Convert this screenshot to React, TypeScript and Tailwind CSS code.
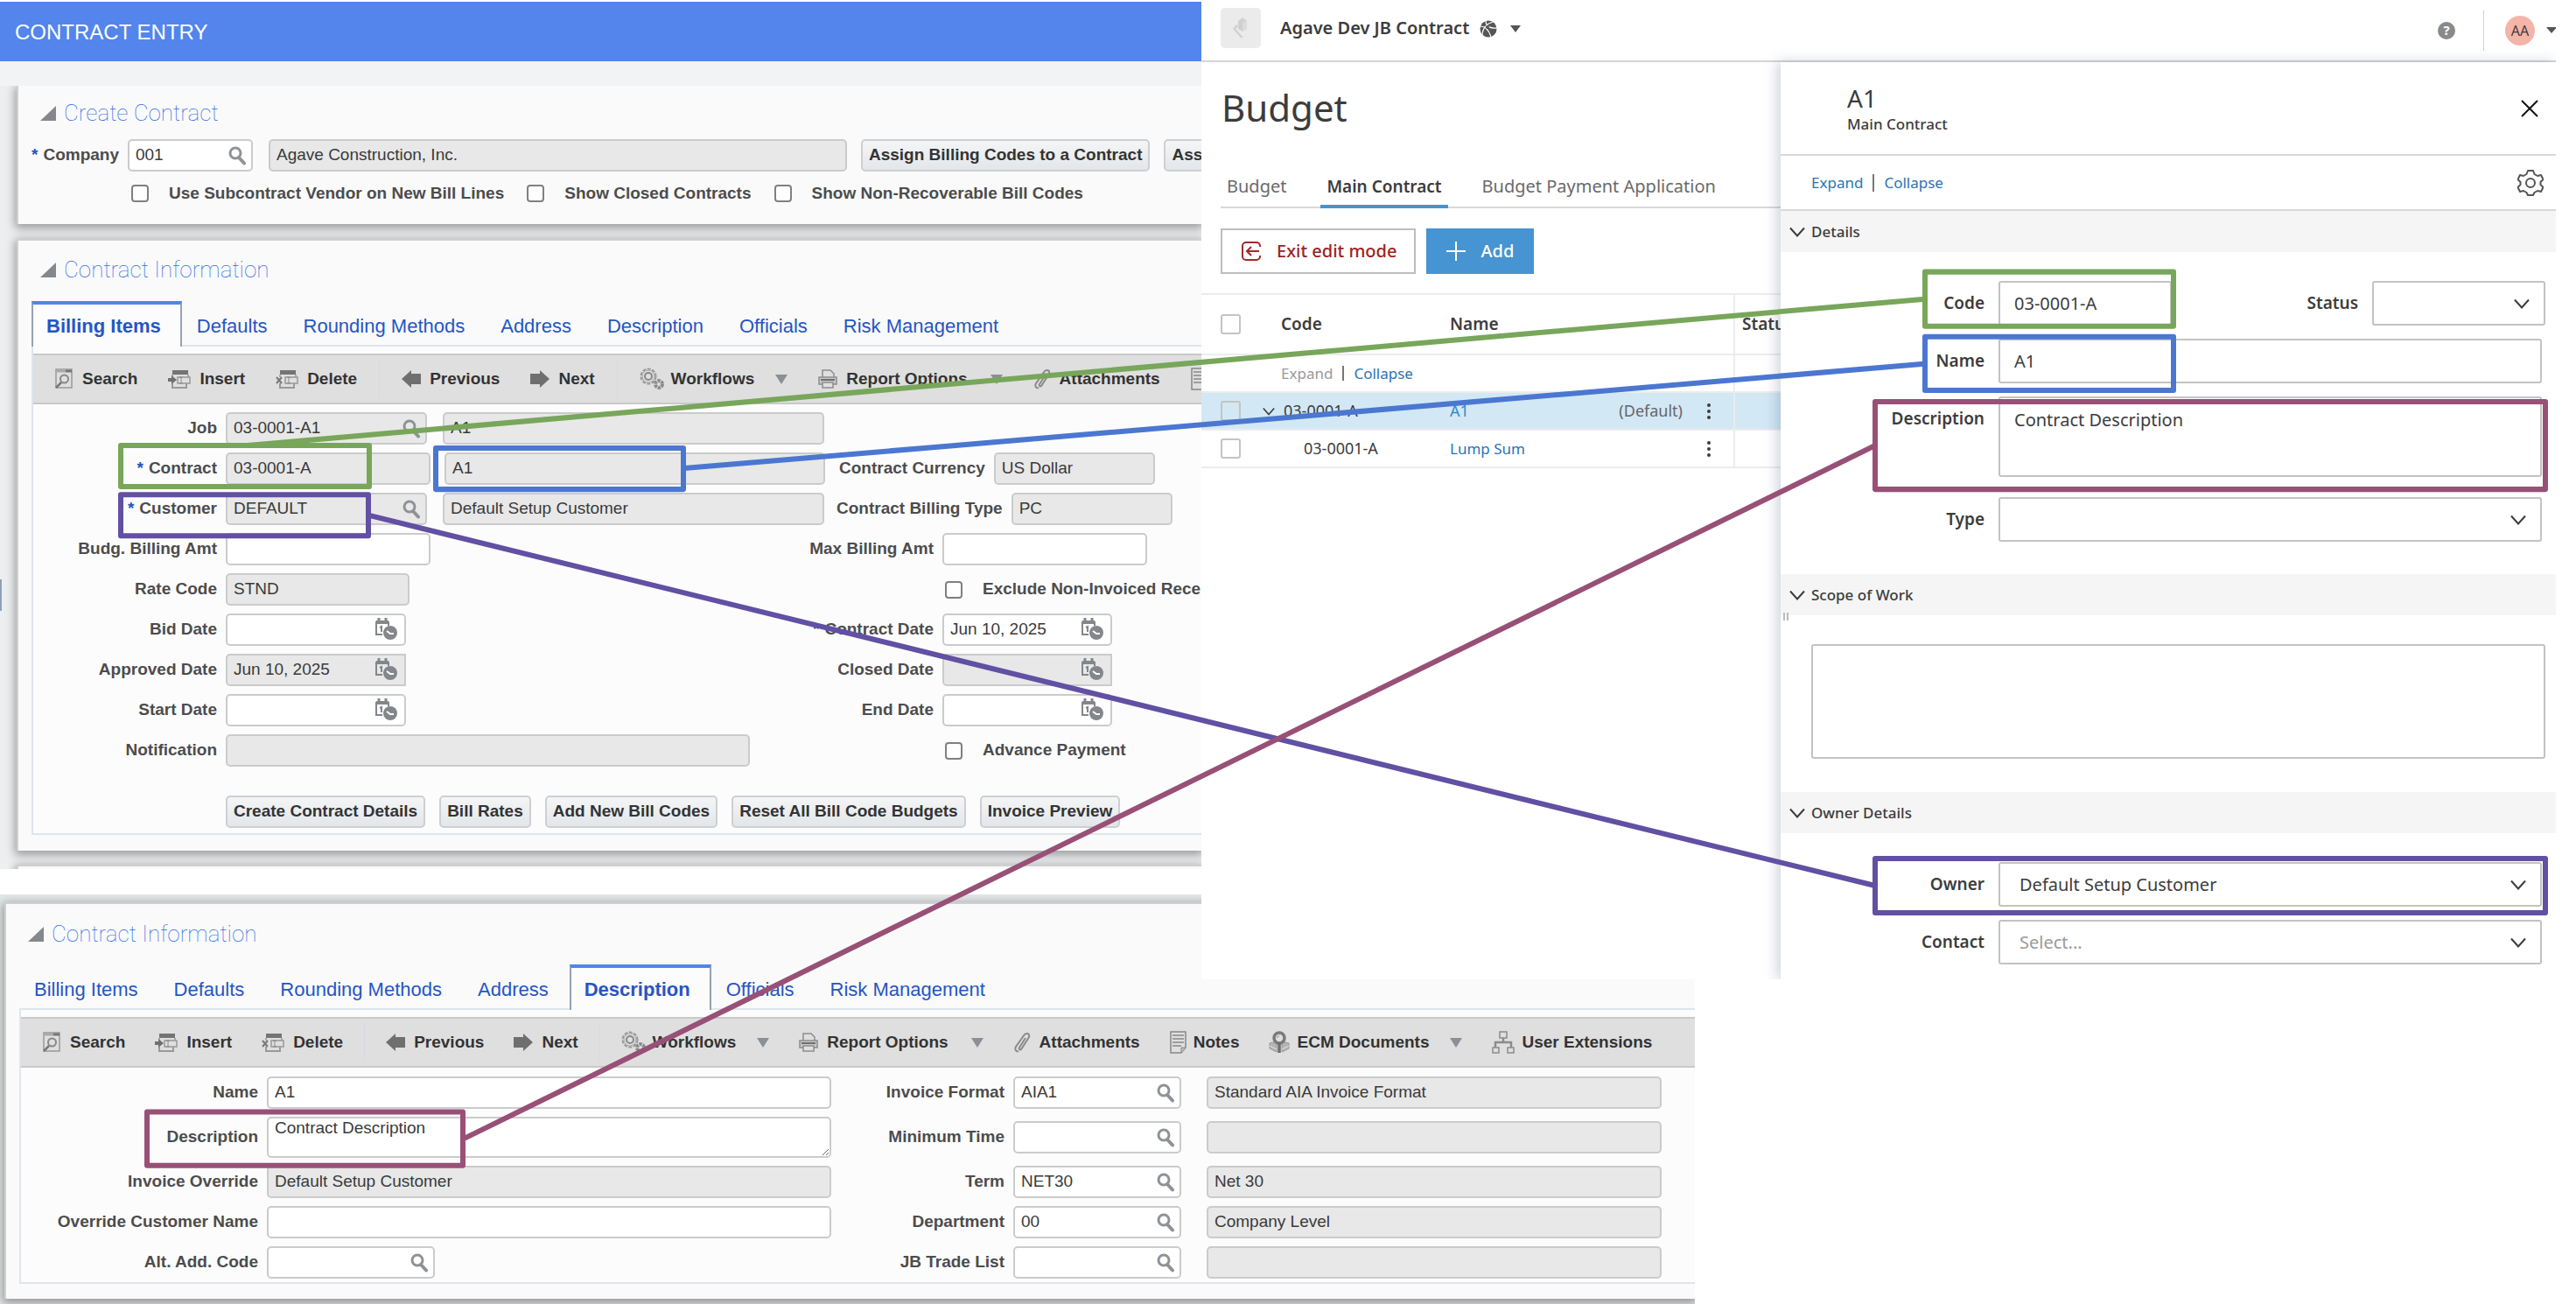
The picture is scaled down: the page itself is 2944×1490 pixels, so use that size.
import type { ReactNode } from 'react';
import { clsx } from 'clsx';

/* ---------- icons ---------- */

function SearchIcon() {
  return (
    <svg viewBox="0 0 22 22" className="h-[22px] w-[22px]" fill="none" stroke="#8e9297">
      <circle cx="9" cy="8" r="6" strokeWidth="3" />
      <path d="M13 13l6 6.5" strokeWidth="4" strokeLinecap="round" />
    </svg>
  );
}

function CalendarIcon() {
  return (
    <svg viewBox="0 0 26 26" className="h-[26px] w-[26px]" fill="none" stroke="#83878c">
      <path d="M9 20H2V6h14v4" strokeWidth="2" />
      <path d="M2 6h14" strokeWidth="4" />
      <path d="M5 1v5M13 1v5" strokeWidth="3" />
      <path d="M6 12l2-1v6" strokeWidth="2" />
      <circle cx="18" cy="18" r="8" fill="#83878c" stroke="none" />
      <path d="M14 16l4 3h4" stroke="#fff" strokeWidth="2" />
    </svg>
  );
}

function CollapseTriangle() {
  return (
    <svg viewBox="0 0 18 17" className="h-[17px] w-[18px]">
      <path d="M18 0v17H0z" fill="#84888c" />
    </svg>
  );
}

function DropTriangle() {
  return (
    <svg viewBox="0 0 14 11" className="h-[11px] w-[14px]">
      <path d="M0 0h14L7 11z" fill="#8b8f96" />
    </svg>
  );
}

function FindPageIcon() {
  return (
    <svg viewBox="0 0 22 24" className="h-6 w-[22px]" fill="none" stroke="#777">
      <path d="M2 1h18v21H2z" stroke="#999" strokeWidth="1.500" />
      <path d="M3 3h10" stroke="#aaa" strokeWidth="3" />
      <path d="M13 3h7" strokeWidth="3" />
      <circle cx="11.500" cy="12" r="4.500" strokeWidth="2" stroke="#888" />
      <path d="M8 16l-6 6" strokeWidth="2.500" />
    </svg>
  );
}

function InsertIcon() {
  return (
    <svg viewBox="0 0 26 22" className="h-[22px] w-[26px]" fill="none" stroke="#999">
      <path d="M5 1h18v5H5z" fill="#747474" stroke="none" />
      <path d="M5 6v3M23 6v3M11 9h14v7H11z" strokeWidth="1.500" />
      <path d="M5 16v5h16v-5" strokeWidth="2" />
      <path d="M0 10h4V7l6 5-6 5v-3H0z" fill="#707070" stroke="none" />
      <path d="M15 9v7M13 9h4M13 16h4" stroke="#8a8a8a" />
    </svg>
  );
}

function DeleteIcon() {
  return (
    <svg viewBox="0 0 26 22" className="h-[22px] w-[26px]" fill="none" stroke="#999">
      <path d="M5 1h18v5H5z" fill="#747474" stroke="none" />
      <path d="M5 6v3M23 6v3M11 9h14v7H11z" strokeWidth="1.500" />
      <path d="M5 16v5h16v-5" strokeWidth="2" />
      <path d="M1 9l6 7M7 9l-6 7" stroke="#777" strokeWidth="2" />
      <path d="M15 9v7M13 9h4M13 16h4" stroke="#8a8a8a" />
    </svg>
  );
}

function ArrowIcon({ flip }: { flip?: boolean }) {
  return (
    <svg viewBox="0 0 22 20" className={clsx('h-5 w-[22px]', flip && 'rotate-180')}>
      <path d="M0 10L11 0v4h11v12H11v4z" fill="#6f6f6f" />
    </svg>
  );
}

function GearsIcon() {
  return (
    <svg viewBox="0 0 28 26" className="h-[26px] w-7" fill="none">
      <circle cx="10" cy="10" r="8.500" stroke="#999" strokeWidth="2" strokeDasharray="4 1.500" />
      <circle cx="10" cy="10" r="7" stroke="#a3a3a3" />
      <circle cx="10" cy="10" r="4" stroke="#888" strokeWidth="2" />
      <circle cx="22" cy="19" r="4" stroke="#8a8a8a" strokeWidth="4" strokeDasharray="3.200 1" />
    </svg>
  );
}

function PrinterIcon() {
  return (
    <svg viewBox="0 0 22 22" className="h-[22px] w-[22px]" fill="none" stroke="#8d8d8d" strokeWidth="1.500">
      <path d="M5 9V1h9l4 4v4" />
      <path d="M1 9h20v8H1z" fill="#c9c9c9" />
      <path d="M3 12h16" stroke="#6f6f6f" strokeWidth="2" />
      <path d="M5 15h12v6H5z" fill="#e0e0e0" />
    </svg>
  );
}

function ClipIcon() {
  return (
    <svg viewBox="0 0 20 24" className="h-6 w-5" fill="none" stroke="#8b8b8b" strokeWidth="2">
      <path d="M14 7L7 18c-1 2 1 3 2 2l9-14c1-4-2-5-5-3L3 17c-2 4 1 6 3 5" />
    </svg>
  );
}

function NotesIcon() {
  return (
    <svg viewBox="0 0 19 26" className="h-[26px] w-[19px]" fill="none" stroke="#888">
      <path d="M1 1h17v18l-5 6H1z" strokeWidth="1.500" />
      <path d="M3 5h13M3 9h13M3 13h13M3 17h10" strokeWidth="1.500" />
      <path d="M18 19h-5v6" fill="#bbb" />
    </svg>
  );
}

function EcmIcon() {
  return (
    <svg viewBox="0 0 24 26" className="h-[26px] w-6" fill="none">
      <path d="M1 14l8-2v12l-8-4zM23 14l-8-2v12l8-4z" fill="#b4b4b4" stroke="#989898" />
      <path d="M1 17l8 4M23 17l-8 4" stroke="#e2e2e2" />
      <circle cx="12" cy="8" r="6" stroke="#7a7a7a" strokeWidth="3.500" />
      <path d="M12 13v12" stroke="#6f6f6f" strokeWidth="3.500" />
      <path d="M9 8l3-3" stroke="#aaa" strokeWidth="1.500" />
    </svg>
  );
}

function HierarchyIcon() {
  return (
    <svg viewBox="0 0 26 26" className="h-[26px] w-[26px]" fill="none" stroke="#8c8c8c" strokeWidth="1.500">
      <path d="M9 1h8v7H9zM1 19h7v6H1zM18 19h7v6h-7z" />
      <path d="M13 8v5M4 19v-6h18v6" strokeWidth="2.500" />
    </svg>
  );
}

function Chevron({ className = 'h-[18px] w-[18px]' }: { className?: string }) {
  return (
    <svg viewBox="0 0 18 18" className={className} fill="none" stroke="#3c3c3c" strokeWidth="2">
      <path d="M1 4.500l8 9 8-9" />
    </svg>
  );
}

/* ---------- contract entry ---------- */

function Field({
  id,
  value = '',
  locked,
  icon,
  className,
  label,
}: {
  id?: string;
  value?: string;
  locked?: boolean;
  icon?: 'search' | 'date';
  className?: string;
  label?: string;
}) {
  return (
    <div
      className={clsx(
        'flex h-[37px] shrink-0 items-center rounded-[5px] border-2 border-[#cbcbcb]',
        locked ? 'bg-[#e8e8e8]' : 'bg-white',
        className,
      )}
    >
      <input
        id={id}
        aria-label={label}
        defaultValue={value}
        readOnly={locked}
        className="w-full min-w-0 flex-1 bg-transparent px-[7px] text-[19px] text-[#3a3a3a] outline-none"
      />
      {icon === 'search' && (
        <button type="button" aria-label="Look up" className="mr-[5px]">
          <SearchIcon />
        </button>
      )}
      {icon === 'date' && (
        <button type="button" aria-label="Pick a date" className="mb-1 mr-[8px]">
          <CalendarIcon />
        </button>
      )}
    </div>
  );
}

function Label({ htmlFor, required, className, children }: { htmlFor: string; required?: boolean; className?: string; children: ReactNode }) {
  return (
    <label htmlFor={htmlFor} className={clsx('shrink-0 whitespace-nowrap font-bold text-[#4c4c4c]', className)}>
      {required && <span className="mr-[6px] text-[#2456c4]">*</span>}
      {children}
    </label>
  );
}

function Check({ id, children }: { id: string; children: ReactNode }) {
  return (
    <div className="flex items-center gap-[23px]">
      <input
        id={id}
        type="checkbox"
        className="h-5 w-5 shrink-0 appearance-none rounded-[4px] border-2 border-[#808080] bg-white"
      />
      <Label htmlFor={id}>{children}</Label>
    </div>
  );
}

function GreyButton({ children }: { children: ReactNode }) {
  return (
    <button
      type="button"
      className="h-[37px] shrink-0 whitespace-nowrap rounded-[5px] border-2 border-[#cdcfd2] bg-linear-to-b from-[#f4f5f6] to-[#e3e6ea] px-[7px] font-bold text-[#333]"
    >
      {children}
    </button>
  );
}

function SectionTitle({ children }: { children: ReactNode }) {
  return (
    <div className="flex items-center gap-[9px]">
      <CollapseTriangle />
      <h2 className="font-[Roboto] text-[26px] font-thin leading-8 text-[#2f6de4]">{children}</h2>
    </div>
  );
}

const TABS = ['Billing Items', 'Defaults', 'Rounding Methods', 'Address', 'Description', 'Officials', 'Risk Management'];

function Tabs({ active }: { active: string }) {
  return (
    <div role="tablist" className="-mb-[2px] flex">
      {TABS.map((tab) => (
        <button
          key={tab}
          type="button"
          role="tab"
          aria-selected={tab === active}
          className={clsx(
            'h-[52px] whitespace-nowrap text-[22px] text-[#2456c4]',
            tab === active
              ? 'border-x-2 border-t-4 border-x-[#94a3b5] border-t-[#4f86ec] bg-[#fcfcfc] pl-[15px] pr-[22px] font-bold'
              : 'border-t-4 border-transparent pl-[17px] pr-[24px]',
          )}
        >
          {tab}
        </button>
      ))}
    </div>
  );
}

function Tool({ icon, menu, snug, children }: { icon: ReactNode; menu?: boolean; snug?: boolean; children: ReactNode }) {
  return (
    <button
      type="button"
      className={clsx('flex shrink-0 items-center whitespace-nowrap font-bold text-[#333]', snug ? 'gap-2' : 'gap-[10px]')}
    >
      {icon}
      {children}
      {menu && (
        <span className="ml-[16px]">
          <DropTriangle />
        </span>
      )}
    </button>
  );
}

function Divider() {
  return <span className="-mx-[10px] h-11 w-px shrink-0 bg-[#d3dae0]" />;
}

function Toolbar({ tight }: { tight?: boolean }) {
  return (
    <div
      className={clsx(
        'mt-[8px] flex h-[58px] items-center overflow-hidden border-y-2 border-[#c9c9c9] bg-[#dfdfdf] pl-[24px]',
        tight ? 'gap-[34px]' : 'gap-[35px]',
      )}
    >
      <Tool icon={<FindPageIcon />}>Search</Tool>
      <Tool icon={<InsertIcon />}>Insert</Tool>
      <Tool icon={<DeleteIcon />}>Delete</Tool>
      <Divider />
      <Tool icon={<ArrowIcon />}>Previous</Tool>
      <Tool icon={<ArrowIcon flip />}>Next</Tool>
      <Divider />
      <Tool icon={<GearsIcon />} menu snug>
        Workflows
      </Tool>
      <Tool icon={<PrinterIcon />} menu>
        Report Options
      </Tool>
      <Tool icon={<ClipIcon />}>Attachments</Tool>
      <Tool icon={<NotesIcon />} snug>Notes</Tool>
      <Tool icon={<EcmIcon />} menu snug>
        ECM Documents
      </Tool>
      <Tool icon={<HierarchyIcon />} snug>User Extensions</Tool>
    </div>
  );
}

function FormRow({ children }: { children: ReactNode }) {
  return <div className="flex items-center gap-[10px]">{children}</div>;
}

function BillingItemsForm() {
  const label = 'w-[210px] text-right';
  const left = 'flex w-[639px] shrink-0 items-center';
  const right = 'w-[160px] text-right';
  return (
    <form className="flex flex-col gap-[9px] pb-[6px] pt-[9px]">
      <FormRow>
        <Label htmlFor="job" className={label}>Job</Label>
        <Field id="job" value="03-0001-A1" locked icon="search" className="w-[230px]" />
        <Field label="Job name" value="A1" locked className="ml-[8px] w-[436px]" />
      </FormRow>
      <FormRow>
        <Label htmlFor="contract" required className={label}>Contract</Label>
        <Field id="contract" value="03-0001-A" locked className="w-[234px]" />
        <Field label="Contract name" value="A1" locked className="ml-[6px] w-[435px]" />
        <Label htmlFor="currency" className="ml-[6px]">Contract Currency</Label>
        <Field id="currency" value="US Dollar" locked className="w-[184px]" />
      </FormRow>
      <FormRow>
        <Label htmlFor="customer" required className={label}>Customer</Label>
        <Field id="customer" value="DEFAULT" locked icon="search" className="w-[230px]" />
        <Field label="Customer name" value="Default Setup Customer" locked className="ml-[8px] w-[436px]" />
        <Label htmlFor="billing-type" className="ml-[4px]">Contract Billing Type</Label>
        <Field id="billing-type" value="PC" locked className="w-[184px]" />
      </FormRow>
      <FormRow>
        <Label htmlFor="budg" className={label}>Budg. Billing Amt</Label>
        <div className={left}>
          <Field id="budg" className="w-[234px]" />
        </div>
        <Label htmlFor="max" className={right}>Max Billing Amt</Label>
        <Field id="max" className="w-[234px]" />
      </FormRow>
      <FormRow>
        <Label htmlFor="rate" className={label}>Rate Code</Label>
        <div className={left}>
          <Field id="rate" value="STND" locked className="w-[210px]" />
        </div>
        <span className="w-[163px] shrink-0" />
        <Check id="exclude">Exclude Non-Invoiced Receipts</Check>
      </FormRow>
      <FormRow>
        <Label htmlFor="bid" className={label}>Bid Date</Label>
        <div className={left}>
          <Field id="bid" icon="date" className="w-[206px]" />
        </div>
        <Label htmlFor="contract-date" required className={right}>Contract Date</Label>
        <Field id="contract-date" value="Jun 10, 2025" icon="date" className="w-[194px]" />
      </FormRow>
      <FormRow>
        <Label htmlFor="approved" className={label}>Approved Date</Label>
        <div className={left}>
          <Field id="approved" value="Jun 10, 2025" locked icon="date" className="w-[206px] rounded-r-none" />
        </div>
        <Label htmlFor="closed" className={right}>Closed Date</Label>
        <Field id="closed" locked icon="date" className="w-[194px] rounded-r-none" />
      </FormRow>
      <FormRow>
        <Label htmlFor="start" className={label}>Start Date</Label>
        <div className={left}>
          <Field id="start" icon="date" className="w-[206px]" />
        </div>
        <Label htmlFor="end" className={right}>End Date</Label>
        <Field id="end" icon="date" className="w-[194px]" />
      </FormRow>
      <FormRow>
        <Label htmlFor="notification" className={label}>Notification</Label>
        <div className={left}>
          <Field id="notification" locked className="w-[599px]" />
        </div>
        <span className="w-[163px] shrink-0" />
        <Check id="advance">Advance Payment</Check>
      </FormRow>
      <div className="mt-6 flex gap-4 pl-[220px]">
        <GreyButton>Create Contract Details</GreyButton>
        <GreyButton>Bill Rates</GreyButton>
        <GreyButton>Add New Bill Codes</GreyButton>
        <GreyButton>Reset All Bill Code Budgets</GreyButton>
        <GreyButton>Invoice Preview</GreyButton>
      </div>
    </form>
  );
}

function DescriptionForm() {
  const label = 'w-[271px] text-right';
  const right = 'w-[188px] text-right';
  const rest = 'ml-[19px] mr-[38px] min-w-0 flex-1';
  return (
    <form className="flex flex-col gap-[9px] pb-[4px] pt-[10px]">
      <FormRow>
        <Label htmlFor="name" className={label}>Name</Label>
        <Field id="name" value="A1" className="w-[645px]" />
        <Label htmlFor="invoice-format" className={right}>Invoice Format</Label>
        <Field id="invoice-format" value="AIA1" icon="search" className="w-[192px]" />
        <Field label="Invoice format name" value="Standard AIA Invoice Format" locked className={rest} />
      </FormRow>
      <FormRow>
        <Label htmlFor="description" className={label}>Description</Label>
        <textarea
          id="description"
          defaultValue="Contract Description"
          className="h-[47px] w-[645px] shrink-0 resize rounded-[5px] border-2 border-[#cbcbcb] bg-white px-[7px] text-[19px] leading-[22px] text-[#3a3a3a]"
        />
        <Label htmlFor="minimum-time" className={right}>Minimum Time</Label>
        <Field id="minimum-time" icon="search" className="w-[192px]" />
        <Field label="Minimum time name" locked className={rest} />
      </FormRow>
      <FormRow>
        <Label htmlFor="invoice-override" className={label}>Invoice Override</Label>
        <Field id="invoice-override" value="Default Setup Customer" locked className="w-[645px]" />
        <Label htmlFor="term" className={right}>Term</Label>
        <Field id="term" value="NET30" icon="search" className="w-[192px]" />
        <Field label="Term name" value="Net 30" locked className={rest} />
      </FormRow>
      <FormRow>
        <Label htmlFor="override-name" className={label}>Override Customer Name</Label>
        <Field id="override-name" className="w-[645px]" />
        <Label htmlFor="department" className={right}>Department</Label>
        <Field id="department" value="00" icon="search" className="w-[192px]" />
        <Field label="Department name" value="Company Level" locked className={rest} />
      </FormRow>
      <FormRow>
        <Label htmlFor="alt-code" className={label}>Alt. Add. Code</Label>
        <div className="w-[645px] shrink-0">
          <Field id="alt-code" icon="search" className="w-[192px]" />
        </div>
        <Label htmlFor="trade-list" className={right}>JB Trade List</Label>
        <Field id="trade-list" icon="search" className="w-[192px]" />
        <Field label="Trade list name" locked className={rest} />
      </FormRow>
    </form>
  );
}

const CARD = 'border-l-2 border-[#d0d0d0] bg-[#fafafa] shadow-[0_3px_10px_2px_rgba(0,0,0,0.35)]';

function ContractEntry() {
  return (
    <section className="relative col-start-1 row-start-1 mb-[29px] min-w-0 overflow-hidden bg-[#eceef0] font-['Liberation_Sans',Arial,sans-serif] text-[19px]">
      <header className="flex h-[70px] items-center border-t-2 border-white bg-[#5385ec] pl-[17px] pt-[2px]">
        <h1 className="text-[24px] text-white">CONTRACT ENTRY</h1>
      </header>
      <div className="relative z-10 h-7 bg-[#f1f3f5]" />
      <div className={clsx(CARD, 'ml-[19px] h-[158px] pt-[15px]')}>
        <div className="pl-[25px]">
          <SectionTitle>Create Contract</SectionTitle>
        </div>
        <div className="mt-[14px] flex items-center pl-[15px]">
          <Label htmlFor="company" required>Company</Label>
          <Field id="company" value="001" icon="search" className="ml-[10px] w-[143px]" />
          <Field label="Company name" value="Agave Construction, Inc." locked className="ml-[18px] mr-4 w-[661px]" />
          <div className="flex gap-4">
            <GreyButton>Assign Billing Codes to a Contract</GreyButton>
            <GreyButton>Assign Bill Rates</GreyButton>
          </div>
        </div>
        <div className="mt-[11px] flex gap-[26px] pl-[129px]">
          <Check id="subcontract">Use Subcontract Vendor on New Bill Lines</Check>
          <Check id="show-closed">Show Closed Contracts</Check>
          <Check id="non-recoverable">Show Non-Recoverable Bill Codes</Check>
        </div>
      </div>
      <div className={clsx(CARD, 'ml-[19px] mt-[17px] border-t-2 pb-[18px] pl-[15px] pt-[17px]')}>
        <div className="pl-[10px]">
          <SectionTitle>Contract Information</SectionTitle>
        </div>
        <div className="mt-[20px]">
          <Tabs active="Billing Items" />
          <div className="border-2 border-r-0 border-[#dfe5ea] bg-[#fcfcfc]">
            <Toolbar />
            <BillingItemsForm />
          </div>
        </div>
      </div>
      <div className={clsx(CARD, 'ml-[19px] mt-[16px] h-[8px] border-t-2')} />
      <span className="absolute left-0 top-[662px] h-9 w-[2px] bg-[#8fa0b3]" />
    </section>
  );
}

function ContractDescription() {
  return (
    <section className="col-span-2 col-start-1 row-span-2 row-start-2 min-w-0 overflow-hidden bg-[#e4e7e8] pb-[9px] pt-[9px] font-['Liberation_Sans',Arial,sans-serif] text-[19px]">
      <div className={clsx(CARD, 'ml-[5px] border-t-2 pb-[17px] pl-[15px] pt-[18px]')}>
        <div className="pl-[10px]">
          <SectionTitle>Contract Information</SectionTitle>
        </div>
        <div className="mt-[19px]">
          <Tabs active="Description" />
          <div className="border-2 border-r-0 border-[#dfe5ea] bg-[#fcfcfc]">
            <Toolbar tight />
            <DescriptionForm />
          </div>
        </div>
      </div>
    </section>
  );
}

/* ---------- budget ---------- */

function TableCheck({ label }: { label: string }) {
  return (
    <input
      type="checkbox"
      aria-label={label}
      className="block h-[23px] w-[23px] appearance-none rounded-[3px] border-2 border-[#c4c4c4] bg-transparent"
    />
  );
}

function Dots({ label }: { label: string }) {
  return (
    <button type="button" aria-label={label} className="px-[6px]">
      <svg viewBox="0 0 4 20" className="h-5 w-1" fill="#3c3c3c">
        <circle cx="2" cy="3" r="2" />
        <circle cx="2" cy="10" r="2" />
        <circle cx="2" cy="17" r="2" />
      </svg>
    </button>
  );
}

function BudgetMain() {
  return (
    <main className="min-w-0 flex-[662] overflow-hidden">
      <h1 className="mt-[22px] pl-[23px] text-[42px] leading-[60px] text-[#3c3c3c]">Budget</h1>
      <nav className="ml-[22px] mt-[35px] flex h-[50px] gap-[32px] whitespace-nowrap border-b-2 border-[#d9d9d9] text-[20px] text-[#6a6a6a]">
        <a href="#budget" className="px-[7px] pt-[10px]">Budget</a>
        <a href="#main-contract" className="-mb-[2px] border-b-4 border-[#4694d1] px-[7px] pt-[10px] text-[19px] font-semibold leading-[30px] text-[#3c3c3c]">
          Main Contract
        </a>
        <a href="#payment" className="px-[7px] pt-[10px]">Budget Payment Application</a>
      </nav>
      <div className="ml-[22px] mt-[23px] flex gap-[12px]">
        <button type="button" className="flex h-[52px] items-center gap-[17px] whitespace-nowrap border-2 border-[#bdbdbd] pl-[21px] pr-[20px] text-[20px] font-medium text-[#9b2423]">
          <svg viewBox="0 0 24 24" className="h-6 w-6" fill="none" stroke="#a02b2a" strokeWidth="2">
            <path d="M22 7V6a4 4 0 0 0-4-4H6a4 4 0 0 0-4 4v12a4 4 0 0 0 4 4h12a4 4 0 0 0 4-4v-1" />
            <path d="M21 12H8M12 7l-5 5 5 5" />
          </svg>
          Exit edit mode
        </button>
        <button type="button" className="flex h-[52px] items-center gap-[17px] bg-[#4694d1] pl-[23px] pr-[23px] text-[20px] font-medium text-white">
          <svg viewBox="0 0 22 22" className="h-[22px] w-[22px]" fill="none" stroke="#fff" strokeWidth="2">
            <path d="M11 0v22M0 11h22" />
          </svg>
          Add
        </button>
      </div>
      <table className="mt-[22px] w-full table-fixed border-collapse text-left text-[18px] text-[#3c3c3c] [&_tr]:border-y-2 [&_tr]:border-[#ececec] [&_td]:p-0 [&_th]:p-0">
        <colgroup>
          <col className="w-[91px]" />
          <col className="w-[193px]" />
          <col className="w-[325px]" />
          <col />
        </colgroup>
        <thead>
          <tr className="h-[69px] text-[19px]">
            <th className="!pl-[22px]"><TableCheck label="Select all" /></th>
            <th className="font-semibold">Code</th>
            <th className="font-semibold">Name</th>
            <th className="overflow-hidden border-l-2 border-[#ececec] !pl-[8px] font-semibold">Status</th>
          </tr>
        </thead>
        <tbody>
          <tr className="h-[43px]">
            <td />
            <td colSpan={2} className="text-[17px]">
              <div className="flex items-center gap-[11px]">
                <button type="button" className="text-[#999]">Expand</button>
                <span className="h-[17px] w-[2px] bg-[#777]" />
                <button type="button" className="text-[#2a74b5]">Collapse</button>
              </div>
            </td>
            <td className="border-l-2 border-[#ececec]" />
          </tr>
          <tr className="h-[43px] bg-[#d2e8f5]">
            <td className="!pl-[22px]">
              <div className="flex items-center justify-between pr-[7px]">
                <TableCheck label="Select A1" />
                <Chevron className="h-[14px] w-[14px]" />
              </div>
            </td>
            <td className="!pl-[3px]">03-0001-A</td>
            <td>
              <div className="flex items-center">
                <a href="#a1" className="text-[#3389cf]">A1</a>
                <span className="ml-auto mr-[22px] text-[#666]">(Default)</span>
                <span className="mr-[20px] flex"><Dots label="A1 actions" /></span>
              </div>
            </td>
            <td className="border-l-2 border-[#ececec]" />
          </tr>
          <tr className="h-[43px]">
            <td className="!pl-[22px]"><TableCheck label="Select Lump Sum" /></td>
            <td className="!pl-[26px]">03-0001-A</td>
            <td>
              <div className="flex items-center justify-between">
                <a href="#lump-sum" className="text-[17px] text-[#2a74b5]">Lump Sum</a>
                <span className="mr-[20px] flex"><Dots label="Lump Sum actions" /></span>
              </div>
            </td>
            <td className="border-l-2 border-[#ececec]" />
          </tr>
        </tbody>
      </table>
    </main>
  );
}

function SectionBar({ children }: { children: ReactNode }) {
  return (
    <button type="button" className="flex h-[47px] w-full items-center gap-[7px] bg-[#f5f5f5] pl-[10px] text-[17px] font-medium">
      <Chevron />
      {children}
    </button>
  );
}

const BOX = 'rounded-[3px] border-2 border-[#c3c3c3] bg-white text-[20px] text-[#3c3c3c]';

function DrawerLabel({ htmlFor, className, children }: { htmlFor: string; className?: string; children: ReactNode }) {
  return (
    <label htmlFor={htmlFor} className={clsx('shrink-0 text-right text-[19px] font-semibold', className)}>
      {children}
    </label>
  );
}

function Select({ id, value = '', muted, className }: { id: string; value?: string; muted?: boolean; className?: string }) {
  return (
    <div className={clsx('relative', className)}>
      <select id={id} className={clsx(BOX, 'h-[51px] w-full appearance-none pl-[22px]', muted && '!text-[#9a9a9a]')}>
        <option>{value}</option>
      </select>
      <span className="pointer-events-none absolute right-[18px] top-[17px]">
        <Chevron />
      </span>
    </div>
  );
}

function Drawer() {
  return (
    <aside className="relative min-w-0 flex-[886] bg-white text-[#3c3c3c] shadow-[-4px_0_14px_rgba(60,80,110,0.25)]">
      <div className="flex h-[107px] items-start border-b-2 border-[#d9d9d9] pl-[76px] pr-[20px] pt-[23px]">
        <div>
          <h2 className="text-[28px] leading-[36px]">A1</h2>
          <p className="text-[17px] font-medium leading-[24px]">Main Contract</p>
        </div>
        <button type="button" aria-label="Close" className="ml-auto mt-[20px]">
          <svg viewBox="0 0 20 20" className="h-5 w-5" fill="none" stroke="#111" strokeWidth="2">
            <path d="M1 1l18 18M19 1L1 19" />
          </svg>
        </button>
      </div>
      <div className="flex h-[63px] items-center border-b-2 border-[#d9d9d9] pl-[35px] pr-[14px] text-[17px]">
        <button type="button" className="text-[#2a74b5]">Expand</button>
        <span className="mx-[11px] h-5 w-[2px] bg-[#777]" />
        <button type="button" className="text-[#2a74b5]">Collapse</button>
        <button type="button" aria-label="Settings" className="ml-auto">
          <svg viewBox="0 0 30 30" className="h-[30px] w-[30px]" fill="none" stroke="#555" strokeWidth="2" strokeLinejoin="round">
            <path d="M12 1h6l1.500 4 3.500 2 4-1 2.500 5-3 3v3l3 3-2.500 5-4-1-3.500 2L18 29h-6l-1.500-3L7 24l-4 1-2.500-5 3-3v-3l-3-3L3 6l4 1 3.500-2z" />
            <circle cx="15" cy="15" r="5" />
          </svg>
        </button>
      </div>
      <SectionBar>Details</SectionBar>
      <div className="flex flex-col gap-[15px] pb-[37px] pr-[16px] pt-[33px]">
        <div className="flex items-center gap-4">
          <DrawerLabel htmlFor="code" className="w-[233px]">Code</DrawerLabel>
          <input id="code" defaultValue="03-0001-A" className={clsx(BOX, 'h-[51px] w-[198px] px-4')} />
          <DrawerLabel htmlFor="status" className="ml-auto">Status</DrawerLabel>
          <Select id="status" className="-mr-1 w-[198px]" />
        </div>
        <div className="flex items-center gap-4">
          <DrawerLabel htmlFor="a1-name" className="w-[233px]">Name</DrawerLabel>
          <input id="a1-name" defaultValue="A1" className={clsx(BOX, 'h-[51px] min-w-0 flex-1 px-4')} />
        </div>
        <div className="mb-[8px] flex gap-4">
          <DrawerLabel htmlFor="a1-description" className="w-[233px] pt-[11px]">Description</DrawerLabel>
          <textarea
            id="a1-description"
            defaultValue="Contract Description"
            className={clsx(BOX, 'h-[92px] min-w-0 flex-1 resize-none px-4 pt-[10px]')}
          />
        </div>
        <div className="flex items-center gap-4">
          <DrawerLabel htmlFor="type" className="w-[233px]">Type</DrawerLabel>
          <Select id="type" className="min-w-0 flex-1" />
        </div>
      </div>
      <SectionBar>Scope of Work</SectionBar>
      <span className="absolute left-[3px] top-[629px] h-[9px] w-[6px] border-x-2 border-[#bbb]" />
      <div className="flex pb-[38px] pl-[35px] pr-[12px] pt-[33px]">
        <textarea aria-label="Scope of Work" className={clsx(BOX, 'h-[131px] w-full resize-none')} />
      </div>
      <SectionBar>Owner Details</SectionBar>
      <div className="flex flex-col gap-[15px] pb-[17px] pr-[16px] pt-[33px]">
        <div className="flex items-center gap-4">
          <DrawerLabel htmlFor="owner" className="w-[233px]">Owner</DrawerLabel>
          <Select id="owner" value="Default Setup Customer" className="min-w-0 flex-1" />
        </div>
        <div className="flex items-center gap-4">
          <DrawerLabel htmlFor="contact" className="w-[233px]">Contact</DrawerLabel>
          <Select id="contact" value="Select..." muted className="min-w-0 flex-1" />
        </div>
      </div>
    </aside>
  );
}

function BudgetApp() {
  return (
    <section className="z-10 col-span-2 col-start-2 row-span-2 row-start-1 flex min-w-0 flex-col overflow-hidden bg-white font-['Noto_Sans','Open_Sans',sans-serif]">
      <header className="flex h-[71px] shrink-0 items-center border-b-2 border-[#d5d5d5] pl-[22px]">
        <span className="mb-[6px] flex h-[46px] w-[46px] items-center justify-center rounded-[5px] bg-[#ebebeb]">
          <svg viewBox="0 0 22 26" className="h-[26px] w-[22px]" fill="#d0d0d0">
            <path d="M8 5l5-4 5 4v9l-5 3-5-3z" />
            <path d="M13 7v10l5-3V5z" fill="#dcdcdc" />
            <path d="M6 9l-4 5 9 10h3L5 14l3-3z" />
          </svg>
        </span>
        <span className="mb-[6px] ml-[22px] text-[20px] font-semibold text-[#3c3c3c]">Agave Dev JB Contract</span>
        <button type="button" aria-label="Switch project" className="mb-[3px] ml-[12px] flex items-center gap-[15px]">
          <svg viewBox="0 0 20 20" className="h-5 w-5" fill="none" stroke="#fff" strokeWidth="1.200">
            <circle cx="10" cy="10" r="9.500" fill="#555" stroke="none" />
            <path d="M1 7c5 0 9 3 12 12M7 1c0 6 5 9 13 8M3 17C3 10 8 4 15 2" />
            <circle cx="9" cy="8" r="2" fill="#555" stroke="none" />
          </svg>
          <svg viewBox="0 0 12 8" className="h-[8px] w-[12px]">
            <path d="M0 0h12L6 8z" fill="#555" />
          </svg>
        </button>
        <button type="button" aria-label="Help" className="ml-auto flex h-5 w-5 items-center justify-center rounded-full bg-[#8a8a8a] text-[15px] font-bold text-white">
          ?
        </button>
        <span className="ml-[32px] mr-[24px] h-[46px] w-px bg-[#d0d0d0]" />
        <button type="button" className="flex items-center gap-[13px] overflow-hidden text-[16px] text-[#3c3c3c]">
          <span className="flex h-[34px] w-[34px] items-center justify-center rounded-full bg-[#f4b4a8]">AA</span>
          <svg viewBox="0 0 11 7" className="h-[7px] w-[11px]">
            <path d="M0 0h12L6 7z" fill="#555" />
          </svg>
        </button>
      </header>
      <div className="flex flex-1">
        <BudgetMain />
        <Drawer />
      </div>
    </section>
  );
}

/* ---------- mapping overlay ---------- */

const MAPPINGS = [
  { color: '#78a65a', from: [138, 508, 284, 47], to: [2200, 310, 284, 62], line: [283, 508, 2200, 341] },
  { color: '#4b77d1', from: [498, 511, 283, 47], to: [2200, 384, 284, 61], line: [782, 534, 2199, 415] },
  { color: '#6150a3', from: [138, 564, 283, 47], to: [2143, 979, 766, 62], line: [423, 588, 2143, 1010] },
  { color: '#985076', from: [168, 1268, 361, 61], to: [2143, 458, 766, 100], line: [531, 1298, 2143, 508] },
];

function MappingOverlay() {
  return (
    <svg
      viewBox="0 0 2944 1490"
      preserveAspectRatio="none"
      className="pointer-events-none absolute inset-0 z-20 h-full w-full"
      fill="none"
      strokeWidth="6"
      strokeLinejoin="round"
    >
      {MAPPINGS.map(({ color, from, to, line }) => (
        <g key={color} stroke={color}>
          <rect x={from[0]} y={from[1]} width={from[2]} height={from[3]} />
          <rect x={to[0]} y={to[1]} width={to[2]} height={to[3]} />
          <line x1={line[0]} y1={line[1]} x2={line[2]} y2={line[3]} />
        </g>
      ))}
    </svg>
  );
}

export default function App() {
  return (
    <div className="relative grid grid-cols-[1373fr_564fr_984fr_23fr] grid-rows-[1022px_97px_auto] overflow-hidden bg-white">
      <ContractEntry />
      <ContractDescription />
      <BudgetApp />
      <MappingOverlay />
    </div>
  );
}
